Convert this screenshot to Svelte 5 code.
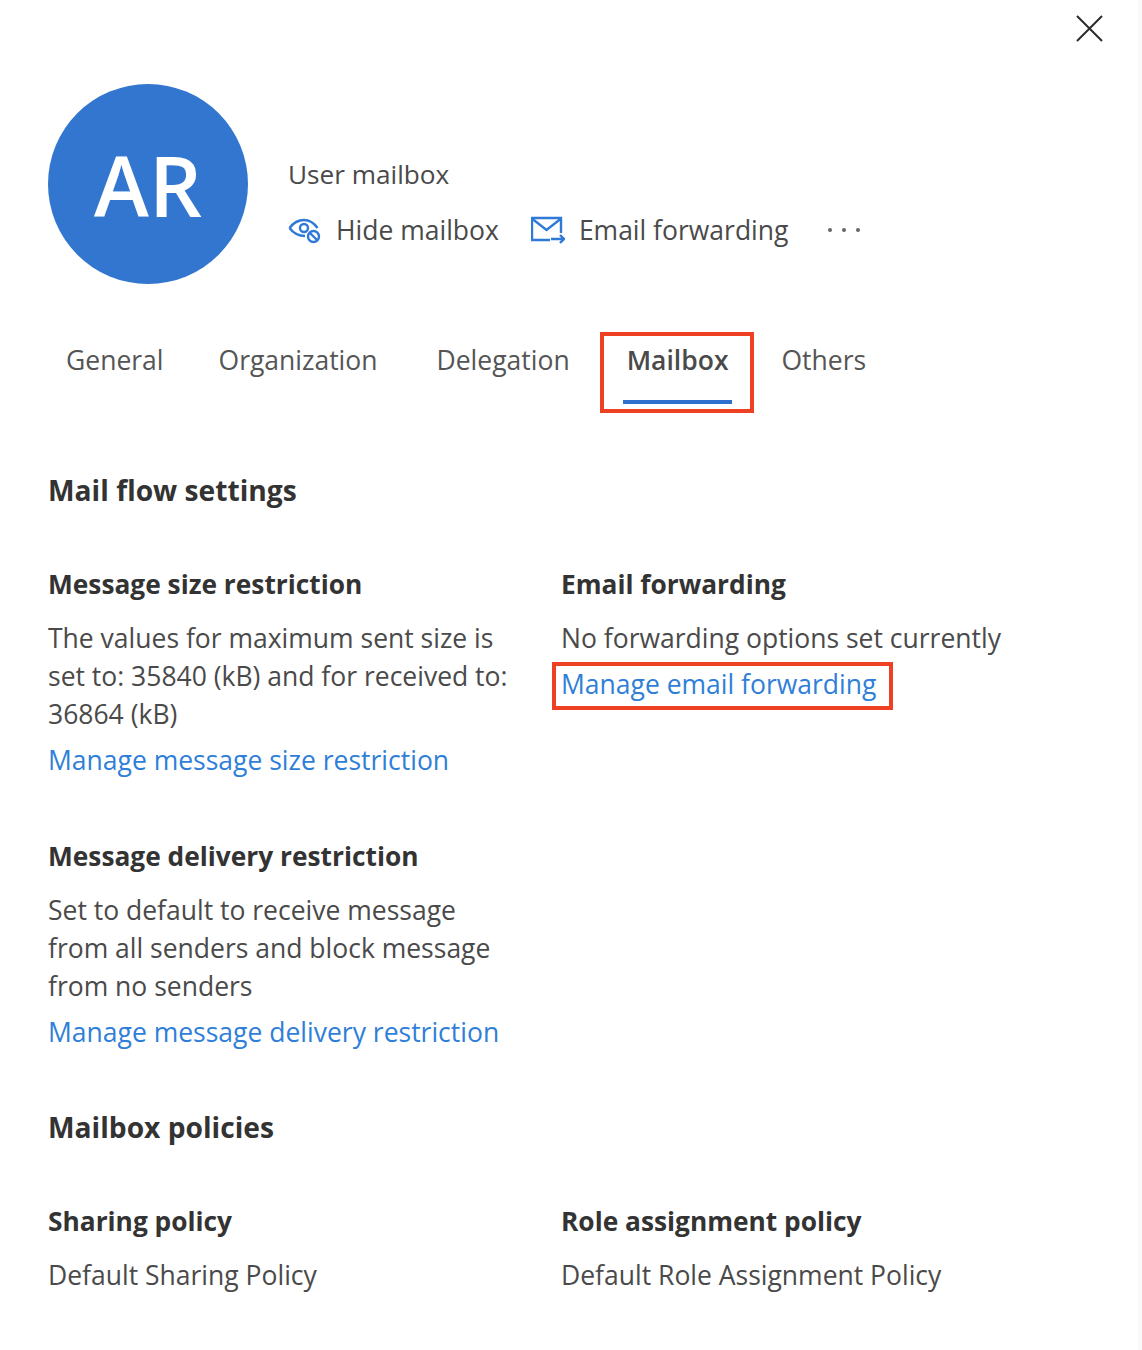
<script>
	const tabs = ['General', 'Organization', 'Delegation', 'Mailbox', 'Others'];
</script>

<div class="panel">
	<div class="topbar">
		<button class="close" aria-label="Close">
			<svg width="28" height="28" viewBox="0 0 28 28"><path d="M2 2 L27 27 M27 2 L2 27" stroke="#2b2b2b" stroke-width="2" fill="none" /></svg>
		</button>
	</div>

	<header class="head">
		<div class="avatar">AR</div>
		<div class="info">
			<div class="kind">User mailbox</div>
			<div class="actions">
				<span class="action">
					<svg width="34" height="28" viewBox="0 0 34 28" fill="none" stroke="#2f7ad6" stroke-width="2.400">
						<path d="M1.500 12 C6 6 11 4 16 4 C21 4 26 7 29.500 12" />
						<path d="M1.500 12 C6 18 11 20 17 20" />
						<circle cx="16" cy="12" r="4" />
						<circle cx="25.500" cy="20.500" r="5.500" fill="#fff" />
						<path d="M22 17 L29 24" />
					</svg>
					Hide mailbox
				</span>
				<span class="action second">
					<svg width="34" height="28" viewBox="0 0 34 28" fill="none" stroke="#2f7ad6" stroke-width="2.400">
						<path d="M19 24 H1 V2 H30 V17" />
						<path d="M1.500 3 L15.500 14 L29.500 3" />
						<path d="M20 23 H33 M29 19 L33 23 L29 27" />
					</svg>
					Email forwarding
				</span>
				<span class="more">
					<i></i><i></i><i></i>
				</span>
			</div>
		</div>
	</header>

	<nav class="tabs">
		{#each tabs as tab}
			<div class="tab" class:active={tab === 'Mailbox'}>{tab}</div>
		{/each}
	</nav>

	<h2 class="section first">Mail flow settings</h2>
	<div class="grid">
		<div class="item">
			<h3>Message size restriction</h3>
			<p>The values for maximum sent size is set to: 35840 (kB) and for received to: 36864 (kB)</p>
			<a href="#size">Manage message size restriction</a>
		</div>
		<div class="item">
			<h3>Email forwarding</h3>
			<p>No forwarding options set currently</p>
			<a class="marked" href="#forward">Manage email forwarding</a>
		</div>
		<div class="item">
			<h3>Message delivery restriction</h3>
			<p>Set to default to receive message from all senders and block message from no senders</p>
			<a href="#delivery">Manage message delivery restriction</a>
		</div>
	</div>

	<h2 class="section">Mailbox policies</h2>
	<div class="grid">
		<div class="item">
			<h3>Sharing policy</h3>
			<p>Default Sharing Policy</p>
		</div>
		<div class="item">
			<h3>Role assignment policy</h3>
			<p>Default Role Assignment Policy</p>
		</div>
	</div>
</div>

<style>
	:global(body) {
		margin: 0;
		background: #fff;
	}

	.panel {
		width: 1142px;
		height: 1350px;
		box-sizing: border-box;
		padding: 0 36px 0 48px;
		border-right: 4px solid #fafafa;
		font-family: 'Open Sans', 'Liberation Sans', sans-serif;
		font-size: 26.5px;
		color: #4a4a4a;
		overflow: hidden;
	}

	.topbar {
		display: flex;
		justify-content: flex-end;
		height: 84px;
	}

	.close {
		border: 0;
		background: none;
		padding: 0;
		margin: 14px -1px 0 0;
		width: 28px;
		height: 28px;
	}

	.head {
		display: flex;
		align-items: center;
		gap: 40px;
	}

	.avatar {
		width: 200px;
		height: 200px;
		border-radius: 50%;
		background: #3276cf;
		color: #fff;
		font-size: 83px;
		font-weight: 600;
		display: flex;
		align-items: center;
		justify-content: center;
	}

	.info {
		padding-top: 36px;
	}

	.kind {
		line-height: 36px;
		margin-bottom: 20px;
		font-size: 26.2px;
	}

	.actions {
		display: flex;
		align-items: center;
		line-height: 36px;
	}

	.action {
		display: flex;
		align-items: center;
		gap: 14px;
	}

	.second {
		margin-left: 32px;
	}

	.more {
		display: flex;
		gap: 10px;
		margin-left: 40px;
	}

	.more i {
		width: 4px;
		height: 4px;
		background: #666;
		border-radius: 50%;
	}

	.tabs {
		display: flex;
		margin-top: 48px;
		margin-left: 18px;
		gap: 57px;
		height: 80px;
	}

	.tab {
		position: relative;
		line-height: 56px;
		color: #555;
	}

	.tab:nth-child(2) {
		margin-left: -2px;
	}

	.tab:nth-child(3) {
		margin-left: 2px;
	}

	.tab:last-child {
		margin-left: -4px;
	}

	.tab.active {
		font-weight: 600;
		color: #4a4a4a;
	}

	.tab.active::before {
		content: '';
		position: absolute;
		left: -27px;
		right: -26px;
		top: 0;
		bottom: -1px;
		border: 4px solid #ee4023;
	}

	.tab.active::after {
		content: '';
		position: absolute;
		left: -4px;
		right: -4px;
		top: 68px;
		height: 4px;
		background: #2f6fce;
	}

	.section {
		margin: 57px 0 0;
		font-size: 28.2px;
		font-weight: 700;
		line-height: 38px;
		color: #333;
	}

	.section.first {
		margin-top: 59px;
	}

	.grid {
		display: grid;
		grid-template-columns: 513px 1fr;
		row-gap: 58px;
		margin-top: 56px;
	}

	.item {
		width: 470px;
	}

	h3 {
		margin: 0 0 16px;
		font-size: 26.3px;
		font-weight: 700;
		line-height: 38px;
		color: #333;
	}

	p {
		margin: 0 0 8px;
		line-height: 38px;
	}

	a {
		color: #2f7fd8;
		text-decoration: none;
		line-height: 38px;
		display: block;
		width: max-content;
		white-space: nowrap;
	}

	.marked {
		position: relative;
	}

	.marked::after {
		content: '';
		position: absolute;
		left: -9px;
		right: -17px;
		top: -3px;
		bottom: -7px;
		border: 4px solid #ee4023;
	}
</style>
